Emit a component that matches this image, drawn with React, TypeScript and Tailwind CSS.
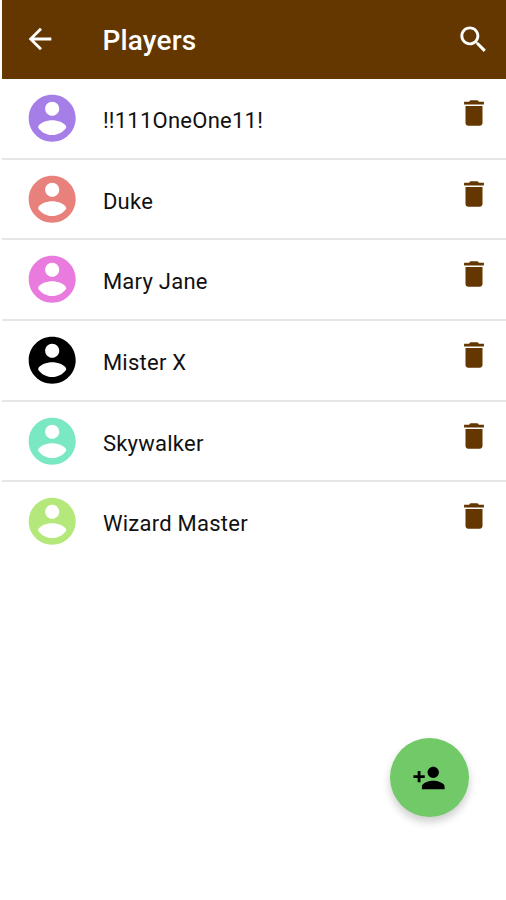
interface Player {
    name: string;
    color: string;
}

const players: Player[] = [
    { name: '!!111OneOne11!', color: 'text-[#a67ee8]' },
    { name: 'Duke', color: 'text-[#e8807c]' },
    { name: 'Mary Jane', color: 'text-[#e87bdd]' },
    { name: 'Mister X', color: 'text-black' },
    { name: 'Skywalker', color: 'text-[#79e8c3]' },
    { name: 'Wizard Master', color: 'text-[#b5e87b]' },
];

const icons = {
    back: 'M20 11H7.83l5.59-5.59L12 4l-8 8 8 8 1.41-1.41L7.83 13H20v-2z',
    search: 'M15.5 14h-.79l-.28-.27C15.41 12.59 16 11.11 16 9.5 16 5.91 13.09 3 9.5 3S3 5.91 3 9.5 5.91 16 9.5 16c1.61 0 3.09-.59 4.23-1.57l.27.28v.79l5 4.99L20.49 19l-4.99-5zm-6 0C7.01 14 5 11.99 5 9.5S7.01 5 9.5 5 14 7.01 14 9.5 11.99 14 9.5 14z',
    account: 'M12 2C6.48 2 2 6.48 2 12s4.48 10 10 10 10-4.48 10-10S17.52 2 12 2zm0 3c1.66 0 3 1.34 3 3s-1.34 3-3 3-3-1.34-3-3 1.34-3 3-3zm0 14.2c-2.5 0-4.71-1.28-6-3.22.03-1.99 4-3.08 6-3.08 1.99 0 5.97 1.09 6 3.08-1.29 1.94-3.5 3.22-6 3.22z',
    trash: 'M6 19c0 1.1.9 2 2 2h8c1.1 0 2-.9 2-2V7H6v12zM19 4h-3.5l-1-1h-5l-1 1H5v2h14V4z',
    personAdd: 'M15 12c2.21 0 4-1.79 4-4s-1.79-4-4-4-4 1.79-4 4 1.79 4 4 4zm-9-2V7H4v3H1v2h3v3h2v-3h3v-2H6zm9 4c-2.67 0-8 1.34-8 4v2h16v-2c0-2.66-5.33-4-8-4z',
};

function Icon({ name, className }: { name: keyof typeof icons; className: string }) {
    return (
        <svg viewBox="0 0 24 24" fill="currentColor" className={`shrink-0 ${className}`} aria-hidden="true">
            <path d={icons[name]} />
        </svg>
    );
}

function PlayerRow({ player }: { player: Player }) {
    return (
        <li className="flex h-[80.7px] items-start border-b-2 border-[#e6e6e6] pl-[22px] pr-[15px] last:border-b-0">
            <Icon name="account" className={`mt-[11px] size-[56.4px] ${player.color}`} />
            <span className="ml-[22.5px] mt-[26px] flex-1 whitespace-nowrap text-[22px] leading-8 tracking-[0.25px] text-[#111]">
                {player.name}
            </span>
            <button className="mt-[17px] text-[#643600]" aria-label="Delete player">
                <Icon name="trash" className="block size-[34px]" />
            </button>
        </li>
    );
}

export default function App() {
    return (
        <div className="relative h-[900px] w-[506px] overflow-hidden bg-white pl-[2px] font-[Roboto,sans-serif]">
            <header className="flex h-[79px] items-center bg-[#643600] pb-px pl-[21px] pr-[15px] text-white">
                <button aria-label="Back">
                    <Icon name="back" className="block size-[34px]" />
                </button>
                <h1 className="ml-[45.5px] mt-[3px] flex-1 text-[28px] font-medium leading-8 tracking-[0.15px]">Players</h1>
                <button aria-label="Search">
                    <Icon name="search" className="block size-[35px]" />
                </button>
            </header>
            <ul>
                {players.map((player) => (
                    <PlayerRow key={player.name} player={player} />
                ))}
            </ul>
            <button
                className="absolute left-[389.5px] top-[738px] flex size-[79px] items-center justify-center rounded-full bg-[#72c967] text-black shadow-[0_5px_8px_rgba(0,0,0,0.2)]"
                aria-label="Add player"
            >
                <Icon name="personAdd" className="size-[34px]" />
            </button>
        </div>
    );
}
